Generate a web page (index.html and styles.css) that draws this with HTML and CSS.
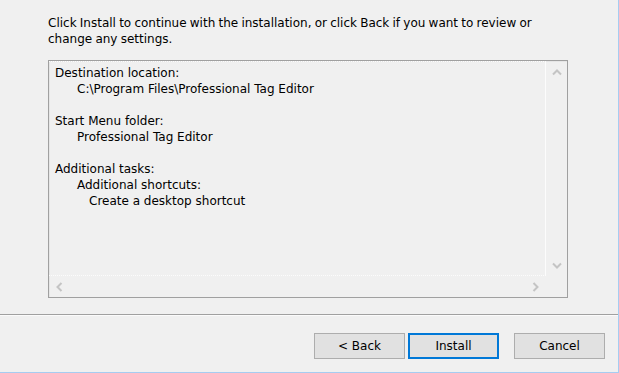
FILE: index.html
```html
<!DOCTYPE html>
<html lang="en">
<head>
  <meta charset="UTF-8" />
  <title>Setup - Ready to Install</title>
  <link rel="stylesheet" href="styles.css">
</head>
<body>
  <div class="window">
    <div class="page">
      <p class="intro">Click Install to continue with the installation, or click Back if you want to review or change any settings.</p>

      <div class="memo">
        <div class="memo-view">
          <div class="memo-line">Destination location:</div>
          <div class="memo-line lvl1">C:\Program Files\Professional Tag Editor</div>
          <div class="memo-line">&nbsp;</div>
          <div class="memo-line">Start Menu folder:</div>
          <div class="memo-line lvl1">Professional Tag Editor</div>
          <div class="memo-line">&nbsp;</div>
          <div class="memo-line">Additional tasks:</div>
          <div class="memo-line lvl1">Additional shortcuts:</div>
          <div class="memo-line lvl2">Create a desktop shortcut</div>
        </div>
        <div class="vscroll">
          <svg width="10" height="7" viewBox="0 0 10 7"><polyline points="1,5.5 5,1.5 9,5.5" /></svg>
          <svg width="10" height="7" viewBox="0 0 10 7"><polyline points="1,1.5 5,5.5 9,1.5" /></svg>
        </div>
        <div class="hscroll">
          <svg width="7" height="10" viewBox="0 0 7 10"><polyline points="5.5,1 1.5,5 5.5,9" /></svg>
          <svg width="7" height="10" viewBox="0 0 7 10"><polyline points="1.5,1 5.5,5 1.5,9" /></svg>
        </div>
        <div class="corner"></div>
      </div>
    </div>

    <div class="separator"></div>

    <div class="buttons">
      <button class="btn">&lt; Back</button>
      <button class="btn default">Install</button>
      <button class="btn cancel">Cancel</button>
    </div>
  </div>
</body>
</html>
```

FILE: styles.css
```css
* { box-sizing: border-box; margin: 0; padding: 0; }
body {
  font-family: 'DejaVu Sans', Tahoma, sans-serif;
  font-size: 12px;
  color: #000;
  background: #f0f0f0;
}
.window {
  width: 619px;
  height: 373px;
  border-right: 1px solid #a6ccf1;
  border-bottom: 1px solid #a6ccf1;
  background: #f0f0f0;
}

.page { padding: 15px 0 0 48px; }
.intro {
  width: 500px;
  line-height: 16px;
  word-spacing: -0.6px;
}

.memo {
  margin-top: 13px;
  width: 520px;
  height: 238px;
  border: 1px solid #a0a0a0;
  box-shadow: inset 1px 1px 0 #e6e6e6;
  display: grid;
  grid-template-columns: 1fr 21px;
  grid-template-rows: 1fr 21px;
}
.memo-view {
  border-top: 1px dotted #fdfdfd;
  border-right: 1px solid #fcfcfc;
  border-bottom: 1px dotted #fcfcfc;
  padding: 3px 0 0 6px;
  line-height: 16px;
}
.lvl1 { padding-left: 22px; }
.lvl2 { padding-left: 34px; }

.vscroll {
  display: flex;
  flex-direction: column;
  justify-content: space-between;
  align-items: center;
  padding: 8px 0 7px 1px;
}
.hscroll {
  display: flex;
  justify-content: space-between;
  align-items: center;
  padding: 0 7px 0 7px;
}
.memo svg polyline {
  fill: none;
  stroke: #c4c4c4;
  stroke-width: 2;
}

.separator {
  margin-top: 16px;
  height: 2px;
  border-top: 1px solid #a0a0a0;
  border-bottom: 1px solid #fbfbfb;
}

.buttons {
  display: flex;
  justify-content: flex-end;
  padding: 17px 13px 0 0;
  gap: 3px;
}
.btn {
  width: 91px;
  height: 26px;
  font-family: 'DejaVu Sans', Tahoma, sans-serif;
  font-size: 12px;
  color: #000;
  background: #e1e1e1;
  border: 1px solid #adadad;
}
.btn.default { border: 2px solid #0078d7; }
.btn.cancel { margin-left: 12px; }
```
